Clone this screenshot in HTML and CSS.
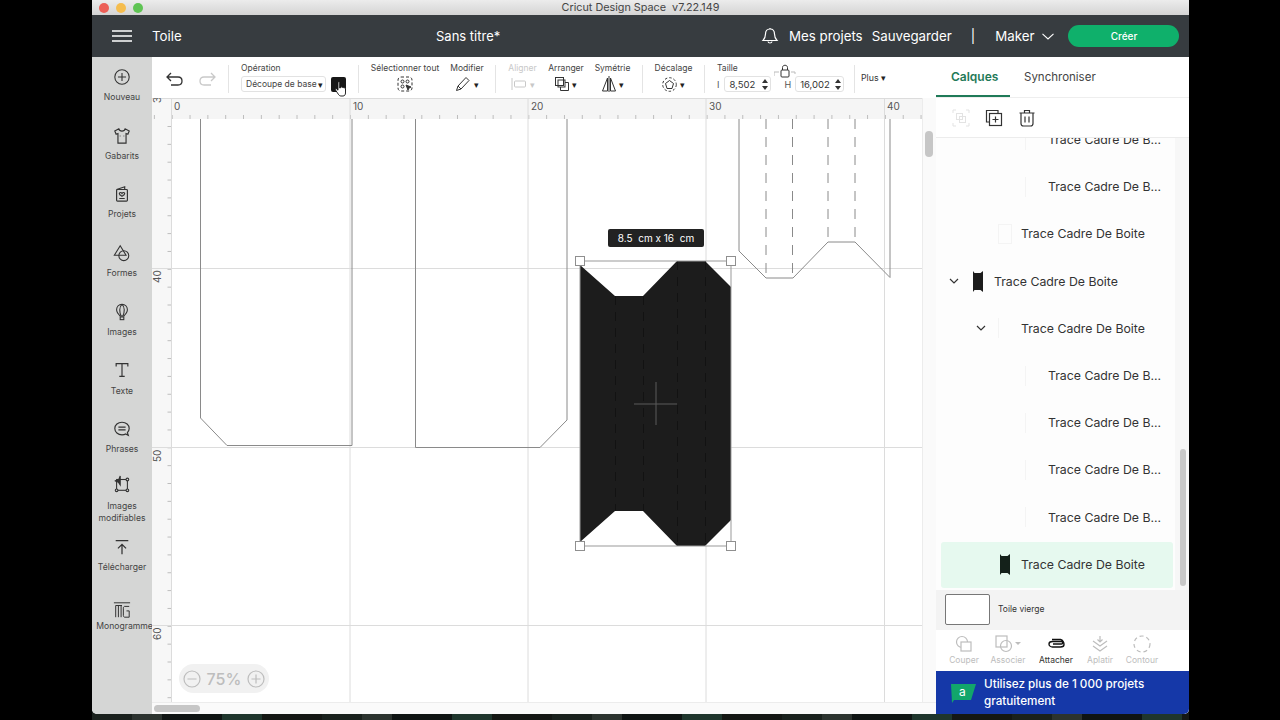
FILE: index.html
```html
<!DOCTYPE html>
<html lang="fr">
<head>
<meta charset="utf-8">
<title>Cricut Design Space</title>
<link rel="stylesheet" href="styles.css">
</head>
<body>
<div class="stage">
<div class="window">
  <div class="titlebar">
    <div class="lights"><span class="light red"></span><span class="light amber"></span><span class="light green"></span></div>
    <div class="apptitle">Cricut Design Space&nbsp; v7.22.149</div>
  </div>
  <header class="topbar">
    <svg class="burger" width="20" height="12" viewBox="0 0 20 12"><path d="M0 1h20M0 6h20M0 11h20" stroke="#fff" stroke-width="1.5"/></svg>
    <span class="top-toile">Toile</span>
    <span class="top-name">Sans titre*</span>
    <svg class="bell" width="18" height="18" viewBox="0 0 18 18" fill="none" stroke="#fff" stroke-width="1.2"><path d="M9 2c-3 0-4.500 2.300-4.500 5 0 3-.7 4.500-2.500 6.500h14c-1.800-2-2.500-3.500-2.500-6.500 0-2.700-1.500-5-4.500-5z"/><path d="M9 1v1M7 14.500c.3 2 3.700 2 4 0"/></svg>
    <span class="top-link mes">Mes projets</span>
    <span class="top-link sauve">Sauvegarder</span>
    <span class="top-link pipe">|</span>
    <span class="top-link maker">Maker</span>
    <svg class="top-chev" width="12" height="7" viewBox="0 0 12 7" fill="none" stroke="#fff" stroke-width="1.1"><path d="M.5.800 6 6l5.500-5.200"/></svg>
    <button class="create">Créer</button>
  </header>
  <div class="main">
    <nav class="side">
      <div class="side-item it-new"><svg width="20" height="20" viewBox="0 0 20 20" fill="none" stroke="#333" stroke-width="1.200"><circle cx="10" cy="10" r="8"/><path d="M10 5.500v9M5.500 10h9"/></svg><span>Nouveau</span></div>
      <div class="side-item"><svg width="20" height="20" viewBox="0 0 20 20" fill="none" stroke="#333" stroke-width="1.300"><path d="M6.500 2 2 4.500 3.500 8l2-.7V18h9V7.300l2 .7L18 4.500 13.500 2c-.5 2-2 2.500-3.500 2.500S7 4 6.500 2z"/><path d="M7.500 10h.8M11.700 10h.8" /></svg><span>Gabarits</span></div>
      <div class="side-item"><svg width="20" height="20" viewBox="0 0 20 20" fill="none" stroke="#333" stroke-width="1.300"><path d="M4 5l9-3v3"/><rect x="4" y="5" width="12" height="13" rx="1"/><path d="M7 9.500c0-1.500 2.200-1.500 3 0 .8-1.500 3-1.500 3 0 0 1.500-3 3-3 3s-3-1.500-3-3zM7 15h6"/></svg><span>Projets</span></div>
      <div class="side-item"><svg width="20" height="20" viewBox="0 0 20 20" fill="none" stroke="#333" stroke-width="1.200"><path d="M8 2 1.500 12.500h13z"/><circle cx="12" cy="13" r="5.500"/></svg><span>Formes</span></div>
      <div class="side-item"><svg width="20" height="20" viewBox="0 0 20 20" fill="none" stroke="#333" stroke-width="1.200"><path d="M10 1.500c-3.500 0-6 2.500-6 6 0 3 2.500 5.500 4 7h4c1.500-1.500 4-4 4-7 0-3.500-2.500-6-6-6z"/><path d="M10 1.500c-1.800 1.500-2.500 3.500-2.500 6s.5 5 1.500 7M10 1.500c1.800 1.500 2.500 3.500 2.500 6s-.5 5-1.500 7"/><rect x="8" y="15.500" width="4" height="3"/></svg><span>Images</span></div>
      <div class="side-item it-txt"><svg width="20" height="20" viewBox="0 0 20 20" fill="none" stroke="#333" stroke-width="1.300"><path d="M3.500 6V3h13v3M10 3v14M7 17h6"/></svg><span>Texte</span></div>
      <div class="side-item it-phr"><svg width="20" height="20" viewBox="0 0 20 20" fill="none" stroke="#333" stroke-width="1.300"><path d="M10 2.500c-4.500 0-8 3-8 7s3.500 7 8 7c1.500 0 3-.3 4-1l3 1.500-1-3c1.200-1.300 2-2.800 2-4.500 0-4-3.500-7-8-7z"/><path d="M6 8h8M6 11h8"/></svg><span>Phrases</span></div>
      <div class="side-item it-mod"><svg width="20" height="20" viewBox="0 0 20 20" fill="none" stroke="#333" stroke-width="1.200"><rect x="4" y="5" width="12" height="12"/><circle cx="4" cy="17" r="1.500" fill="#d5d6d5"/><circle cx="16" cy="17" r="1.500" fill="#d5d6d5"/><circle cx="16" cy="5" r="1.500" fill="#d5d6d5"/><path d="M8 1 6 6 2 6.500l4 1.500 2 3z" fill="#333"/></svg><span>Images<br>modifiables</span></div>
      <div class="side-item it-tel"><svg width="20" height="20" viewBox="0 0 20 20" fill="none" stroke="#333" stroke-width="1.400"><path d="M3 3h14M10 18V7M5.500 11.500 10 7l4.500 4.500"/></svg><span>Télécharger</span></div>
      <div class="side-item it-mono"><svg width="20" height="20" viewBox="0 0 20 20" fill="none" stroke="#333" stroke-width="1.100"><path d="M1 2h18M3 5h7M3 5v13M6 5v13M9 5v13M18 6h-5c-1 0-1.500 1-1.500 2v8c0 1 .5 2 1.500 2h5v-7h-3"/></svg><span>Monogramme</span></div>
    </nav>
    <section class="center">
      <div class="toolbar">
        <div class="history">
          <svg width="18" height="16" viewBox="0 0 18 16" fill="none" stroke="#333" stroke-width="1.300"><path d="M5 1 1 5l4 4M1 5h11c2.500 0 4 1.500 4 4s-1.500 4-4 4H5"/></svg>
          <svg width="18" height="16" viewBox="0 0 18 16" fill="none" stroke="#c9c9c9" stroke-width="1.300"><path d="M13 1l4 4-4 4M17 5H6C3.500 5 2 6.500 2 9s1.500 4 4 4h7"/></svg>
        </div>
        <i class="sep"></i>
        <div class="tool w-op">
          <label class="tl left">Opération</label>
          <div class="ctl">
            <span class="select">Découpe de base<b class="tri">▾</b></span>
            <span class="swatch"></span>
          </div>
        </div>
        <i class="sep"></i>
        <div class="tool w-sel">
          <label class="tl">Sélectionner tout</label>
          <div class="ctl"><svg width="16" height="16" viewBox="0 0 16 16" fill="none" stroke="#333" stroke-width="1"><rect x="1" y="1" width="14" height="14" rx="3" stroke-dasharray="3 2"/><circle cx="5.500" cy="5.500" r="1.500"/><circle cx="10.500" cy="5.500" r="1.500"/><circle cx="5.500" cy="10.500" r="1.500"/><path d="M9 9l5 2-2 1-1 2z" fill="#333"/></svg></div>
        </div>
        <div class="tool w-mod">
          <label class="tl">Modifier</label>
          <div class="ctl"><svg width="16" height="16" viewBox="0 0 16 16" fill="none" stroke="#333" stroke-width="1"><path d="M1.500 14.500 3 10l8-8.500 3 3L6 13z"/><path d="M3 10l3 3"/></svg><b class="tri">▾</b></div>
        </div>
        <i class="sep"></i>
        <div class="tool w-ali off">
          <label class="tl">Aligner</label>
          <div class="ctl"><svg width="16" height="12" viewBox="0 0 16 12" fill="none" stroke="#c8c8c8" stroke-width="1"><path d="M1 0v12"/><rect x="3.500" y="3" width="11" height="6" rx="1"/></svg><b class="tri">▾</b></div>
        </div>
        <div class="tool w-arr">
          <label class="tl">Arranger</label>
          <div class="ctl"><svg width="14" height="14" viewBox="0 0 14 14" fill="none" stroke="#333" stroke-width="1"><rect x=".5" y=".5" width="8" height="8"/><rect x="3" y="3" width="7" height="7"/><path d="M10 5.500h3.500v8h-8V10"/></svg><b class="tri">▾</b></div>
        </div>
        <div class="tool w-sym">
          <label class="tl">Symétrie</label>
          <div class="ctl"><svg width="14" height="16" viewBox="0 0 14 16" fill="none" stroke="#333" stroke-width="1"><path d="M7 0v16M5.500 2 .5 15h5zM8.500 2l5 13h-5z"/></svg><b class="tri">▾</b></div>
        </div>
        <i class="sep"></i>
        <div class="tool w-dec">
          <label class="tl">Décalage</label>
          <div class="ctl"><svg width="15" height="15" viewBox="0 0 15 15" fill="none" stroke="#333" stroke-width="1"><path d="M7.500 3.500 11.500 6.500 10 11.500H5L3.500 6.500z"/><circle cx="7.500" cy="7.500" r="6.800" stroke-dasharray="2.500 2"/></svg><b class="tri">▾</b></div>
        </div>
        <i class="sep"></i>
        <div class="tool w-size">
          <label class="tl left">Taille</label>
          <div class="ctl size-row">
            <span class="dim">I</span>
            <span class="num n-w">8,502<em class="spin"></em></span>
            <span class="dim dim-h">H</span>
            <span class="num n-h">16,002<em class="spin"></em></span>
          </div>
          <svg class="lock" width="22" height="16" viewBox="0 0 22 16" fill="none" stroke="#333" stroke-width="1"><rect x="7" y="6" width="8" height="7" rx="1"/><path d="M8.500 6V3.500c0-3 5-3 5 0V6"/><path d="M0 12V8h5M17 8h4v2" stroke="#bbb"/></svg>
        </div>
        <i class="sep"></i>
        <div class="plus">Plus<b class="tri">▾</b></div>
      </div>
      <div class="work">
        <svg class="canvas" width="770" height="604" viewBox="152 98 770 604">
          <defs>
            <pattern id="tx" x="171.700" y="98" width="17.830" height="21" patternUnits="userSpaceOnUse"><path d="M.5 17v4" stroke="#bdbdbd"/></pattern>
            <pattern id="ty" x="152" y="90.300" width="19" height="17.850" patternUnits="userSpaceOnUse"><path d="M15.500 .5h3.500" stroke="#bdbdbd"/></pattern>
          </defs>
          <rect x="152" y="98" width="770" height="604" fill="#fff"/>
          <rect x="152" y="98" width="770" height="21" fill="#f5f5f5"/>
          <rect x="152" y="98" width="19" height="604" fill="#f7f7f7"/>
          <rect x="152" y="98" width="770" height="21" fill="url(#tx)"/>
          <rect x="152" y="119" width="19" height="583" fill="url(#ty)"/>
          <path class="grid" d="M171.500 98V702M350 98V702M528 98V702M706 98V702M884.500 98V702M152 268.500H922M152 447.500H922M152 625.500H922"/>
          <path d="M152 98.500H922" stroke="#dcdcdc" fill="none"/>
          <text class="rule" x="174" y="110">0</text>
          <text class="rule" x="353" y="110">10</text>
          <text class="rule" x="531" y="110">20</text>
          <text class="rule" x="709" y="110">30</text>
          <text class="rule" x="887" y="110">40</text>
          <text class="rule" transform="translate(161 103) rotate(-90)" x="0" y="0">3</text>
          <text class="rule" transform="translate(161 283) rotate(-90)" x="0" y="0">40</text>
          <text class="rule" transform="translate(161 462) rotate(-90)" x="0" y="0">50</text>
          <text class="rule" transform="translate(161 640) rotate(-90)" x="0" y="0">60</text>
          <path class="cut" d="M200.500 119V418L227 445.500H352V119"/>
          <path class="cut" d="M415.500 119V447.500H540L567 420V119"/>
          <path class="cut" d="M739 119V251L766 278H793L828 242H855L890 277.500V119"/>
          <path class="dash" d="M766 119V278M792.500 119V278M828 119V242M855 119V242"/>
          <path class="solid" d="M580 265 615 296H643L677 261H705L731 287V520L705 546H677L643 511H615L580 542Z"/>
          <path class="dash-dark" d="M615.500 296V511M643.500 296V511M677.500 261V546M705.500 261V546"/>
          <path d="M634 404H677M656 382V425" stroke="#5a5a5a" fill="none"/>
          <rect class="sel" x="580" y="261" width="151" height="285"/>
          <rect class="handle" x="575.500" y="256.500" width="9" height="9"/>
          <rect class="handle" x="726.500" y="256.500" width="9" height="9"/>
          <rect class="handle" x="575.500" y="541.500" width="9" height="9"/>
          <rect class="handle" x="726.500" y="541.500" width="9" height="9"/>
          <rect x="608" y="229" width="96" height="18" rx="2" fill="#222"/>
          <text class="tip" x="656" y="242" text-anchor="middle" xml:space="preserve">8.5  cm x 16  cm</text>
        </svg>
        <div class="vscroll"><span></span></div>
        <div class="zoom">
          <svg width="18" height="18" viewBox="0 0 18 18" fill="none" stroke="#bdbdbd" stroke-width="1.200"><circle cx="9" cy="9" r="8"/><path d="M4.500 9h9"/></svg>
          <span>75%</span>
          <svg width="18" height="18" viewBox="0 0 18 18" fill="none" stroke="#bdbdbd" stroke-width="1.200"><circle cx="9" cy="9" r="8"/><path d="M4.500 9h9M9 4.500v9"/></svg>
        </div>
      </div>
      <div class="hscroll"><span></span></div>
      <svg class="hand" width="14" height="16" viewBox="0 0 14 16"><path d="M4 1.500c0-1 1.700-1 1.700 0V7l1-.3v-.5c.7-.6 1.500-.3 1.600.3.700-.5 1.500-.2 1.600.5.800-.4 1.600 0 1.600.8V12c0 1.800-1 3-2.500 3H7c-1.200 0-2-.7-2.700-1.800L1.500 9C1 8 2 7.300 2.800 8L4 9.200z" fill="#fff" stroke="#111" stroke-width=".9"/></svg>
    </section>
    <aside class="panel">
      <div class="tabs"><span class="tab on">Calques</span><span class="tab">Synchroniser</span></div>
      <div class="layer-tools">
        <svg width="18" height="18" viewBox="0 0 18 18" fill="none" stroke="#e3e3e3"><path d="M1 4V1h3M14 1h3v3M17 14v3h-3M4 17H1v-3"/><rect x="4.500" y="4.500" width="6" height="6"/><rect x="7.500" y="7.500" width="6" height="6"/></svg>
        <svg width="18" height="18" viewBox="0 0 18 18" fill="none" stroke="#333" stroke-width="1.200"><path d="M4 13H1.500V1.500H13V4"/><rect x="4.500" y="4.500" width="12" height="12"/><path d="M10.500 7.500v6M7.500 10.500h6"/></svg>
        <svg width="18" height="18" viewBox="0 0 18 18" fill="none" stroke="#333" stroke-width="1.200"><path d="M1.500 4h15M6.500 4V1.500h5V4M3 4v10.500c0 1.500 1 2.500 2.500 2.500h7c1.500 0 2.500-1 2.500-2.500V4M7 7.500v6M11 7.500v6"/></svg>
      </div>
      <div class="layers">
        <div class="list">
          <div class="row deep"><i class="chev"></i><i class="thumb faint"></i><span>Trace Cadre De B...</span></div>
          <div class="row deep"><i class="chev"></i><i class="thumb faint"></i><span>Trace Cadre De B...</span></div>
          <div class="row mid"><i class="chev"></i><i class="thumb faint box"></i><span>Trace Cadre De Boite</span></div>
          <div class="row top"><svg class="chev" width="10" height="6" viewBox="0 0 10 6" fill="none" stroke="#333" stroke-width="1.200"><path d="M1 1l4 4 4-4"/></svg><svg class="thumb" width="14" height="21" viewBox="0 0 14 21"><path d="M2 0l1.500 2h6L12 0v21l-2.500-2h-6L2 21z" fill="#1c1c1c"/></svg><span>Trace Cadre De Boite</span></div>
          <div class="row mid"><svg class="chev" width="10" height="6" viewBox="0 0 10 6" fill="none" stroke="#333" stroke-width="1.200"><path d="M1 1l4 4 4-4"/></svg><i class="thumb faint"></i><span>Trace Cadre De Boite</span></div>
          <div class="row deep"><i class="chev"></i><i class="thumb faint"></i><span>Trace Cadre De B...</span></div>
          <div class="row deep"><i class="chev"></i><i class="thumb faint"></i><span>Trace Cadre De B...</span></div>
          <div class="row deep"><i class="chev"></i><i class="thumb faint"></i><span>Trace Cadre De B...</span></div>
          <div class="row deep"><i class="chev"></i><i class="thumb faint"></i><span>Trace Cadre De B...</span></div>
          <div class="row current"><i class="chev"></i><svg class="thumb" width="14" height="21" viewBox="0 0 14 21"><path d="M2 0l1.500 2h6L12 0v21l-2.500-2h-6L2 21z" fill="#14211a"/></svg><span>Trace Cadre De Boite</span></div>
        </div>
        <div class="track"><span></span></div>
      </div>
      <div class="blank"><i class="blank-box"></i><span>Toile vierge</span></div>
      <div class="actions">
        <div class="act"><svg width="18" height="18" viewBox="0 0 18 18" fill="none" stroke="#bdbdbd" stroke-width="1.200"><circle cx="7" cy="7" r="5.500"/><rect x="6" y="7" width="10" height="9" fill="#fff"/></svg><span>Couper</span></div>
        <div class="act"><svg width="26" height="18" viewBox="0 0 26 18" fill="none" stroke="#bdbdbd" stroke-width="1.200"><rect x="1" y="1" width="11" height="11"/><circle cx="11" cy="11" r="5.500"/><path d="M20 7h6l-3 3z" fill="#bdbdbd" stroke="none"/></svg><span>Associer</span></div>
        <div class="act active gap"><svg width="18" height="18" viewBox="0 0 18 18" fill="none" stroke="#111" stroke-width="1.400"><path d="M6 9h8.500c1.500 0 1.500-2.500 0-2.500H5.500C3.500 6.500 2 7.500 2 9s1.500 3 3.500 3h8c2 0 3.500-1 3.500-2.500S16 5 13.500 4.500H5"/></svg><span>Attacher</span></div>
        <div class="act"><svg width="18" height="18" viewBox="0 0 18 18" fill="none" stroke="#bdbdbd" stroke-width="1.200"><path d="M9 1v6M6.500 4.500 9 7l2.500-2.500M2 6l7 5 7-5M2 11l7 5 7-5"/></svg><span>Aplatir</span></div>
        <div class="act tight"><svg width="18" height="18" viewBox="0 0 18 18" fill="none" stroke="#bdbdbd" stroke-width="1.200"><circle cx="9" cy="9" r="8" stroke-dasharray="4 3"/></svg><span>Contour</span></div>
      </div>
      <div class="banner">
        <svg width="26" height="21" viewBox="0 0 26 21"><path d="M1 2h25l-5 16H4l-2 3z" fill="#12a66b"/><text x="9" y="14" class="banner-a">a</text></svg>
        <p>Utilisez plus de 1 000 projets gratuitement</p>
      </div>
    </aside>
  </div>
</div>
</div>
</body>
</html>
```

FILE: styles.css
```css
* { box-sizing: border-box; }
html, body { margin: 0; padding: 0; }
body {
  width: 1280px; height: 720px; overflow: hidden; background: #000;
  font-family: Inter, "Liberation Sans", sans-serif; color: #333;
}
.stage {
  width: 1097px; height: 720px; margin-left: 92px;
  background: repeating-linear-gradient(90deg, #1a211d 0 40px, #2c332f 40px 70px, #0f1413 70px 130px, #1f362d 130px 170px, #141714 170px 230px);
}
.window {
  width: 1097px; height: 714px; display: flex; flex-direction: column;
  border-radius: 0 0 5px 5px; overflow: hidden; background: #fff;
}
.titlebar {
  height: 15px; flex: none; display: flex; align-items: center; position: relative;
  background: linear-gradient(#ececec, #d4d4d4);
}
.lights { display: flex; gap: 7px; padding-left: 7px; }
.light { width: 10px; height: 10px; border-radius: 50%; }
.red { background: #ec5f57; } .amber { background: #f5bd4f; } .green { background: #5fc454; }
.apptitle { position: absolute; left: 0; right: 0; text-align: center; font-size: 10.800px; color: #444; line-height: 13px; }

.topbar {
  height: 42px; flex: none; background: #373c40; color: #fff; display: flex; align-items: center;
  font-size: 13.300px; white-space: nowrap;
}
.burger { margin-left: 20px; flex: none; }
.top-toile { margin-left: 20px; width: 284px; flex: none; }
.top-name { width: 325px; font-size: 13px; flex: none; }
.top-link { font-size: 13.300px; flex: none; }
.bell { flex: none; }
.mes { margin-left: 10px; }
.sauve { margin-left: 9px; }
.pipe { margin-left: 19px; }
.maker { margin-left: 20px; }
.top-chev { margin-left: 8px; flex: none; }
.create {
  margin-left: 14px; width: 111px; height: 22px; border: 0; border-radius: 11px; flex: none;
  background: #0fb06b; color: #fff; font: 500 10px Inter, sans-serif;
}

.main { flex: 1; display: flex; min-height: 0; }
.side {
  width: 60px; flex: none; background: #d5d6d5; display: flex; flex-direction: column;
  align-items: center; padding-top: 10px;
}
.side-item { height: 58.700px; width: 60px; flex: none; display: flex; flex-direction: column; align-items: center; font-size: 8.600px; color: #444; text-align: center; line-height: 12px; }
.side-item svg { width: 18px; height: 18px; margin: 1px 0; flex: none; }
.side-item span { margin-top: 4px; white-space: nowrap; }
.it-txt span { margin-top: 5px; }
.it-phr { height: 55px; }
.it-phr span { margin-top: 4px; }
.it-mod { height: 63px; }
.it-mod span { margin-top: 6px; }
.it-tel { height: 63px; }
.it-tel span { margin-top: 4px; }
.it-mono span { margin: 0 0 0 5px; }

.center { width: 784px; flex: none; display: flex; flex-direction: column; position: relative; }
.toolbar { height: 41px; flex: none; display: flex; align-items: center; gap: 12px; background: #fff; position: relative; z-index: 1; }
.history { width: 75px; margin-right: -11px; display: flex; gap: 14px; padding-left: 14px; flex: none; padding-top: 4px; }
.sep { width: 1px; height: 28px; background: #e4e4e4; flex: none; margin-top: 3px; }
.tool { flex: none; display: flex; flex-direction: column; align-items: center; position: relative; padding-top: 5px; height: 41px; }
.tl { font-size: 8.500px; line-height: 13px; color: #444; white-space: nowrap; height: 13px; }
.tl.left { align-self: flex-start; }
.ctl { display: flex; align-items: center; justify-content: center; height: 18px; margin-top: 0; gap: 3px; }
.tri { font-size: 9px; font-weight: 400; color: #222; line-height: 9px; }
.w-op { width: 105px; }
.w-op .ctl { align-self: flex-start; gap: 5px; }
.w-sel { width: 68px; }
.w-mod { width: 32px; }
.w-ali { width: 29px; }
.w-ali .tl { color: #c8c8c8; }
.w-ali .tri { color: #c8c8c8; }
.w-arr { width: 34px; }
.w-sym { width: 35px; }
.w-dec { width: 37px; }
.w-size { width: 125px; }
.select {
  width: 85px; height: 16px; border: 1px solid #e2e2e2; border-radius: 3px; font-size: 8.500px; color: #444;
  display: flex; align-items: center; padding-left: 4px; gap: 1px; white-space: nowrap;
}
.swatch { width: 15px; height: 15px; border-radius: 2px; background: #171717; }
.size-row { align-self: flex-start; justify-content: flex-start; gap: 0; }
.dim { font-size: 9px; color: #555; }
.dim-h { margin-left: 13px; }
.num {
  display: flex; align-items: center; justify-content: space-between; height: 16px; border: 1px solid #e2e2e2; border-radius: 3px;
  font-size: 9.500px; color: #333; padding: 0 2px 0 4px;
}
.n-w { width: 47px; margin-left: 5px; }
.n-h { width: 49px; margin-left: 4px; }
.spin { width: 7px; height: 11px; flex: none; display: flex; flex-direction: column; justify-content: space-between; align-items: center; }
.spin::before { content: ""; border: 3px solid transparent; border-top: 0; border-bottom: 4px solid #333; }
.spin::after { content: ""; border: 3px solid transparent; border-bottom: 0; border-top: 4px solid #333; }
.lock { position: absolute; left: 57px; top: 7px; }
.plus { font-size: 8.800px; color: #333; margin-left: -6px; display: flex; gap: 2px; align-items: center; }

.work { flex: 1; min-height: 0; display: flex; position: relative; }
.canvas { display: block; flex: none; }
.grid { stroke: #dcdcdc; fill: none; }
.rule { font: 10px Inter, sans-serif; fill: #555; }
.cut { fill: none; stroke: #8a8a8a; stroke-width: 1; }
.dash { fill: none; stroke: #8a8a8a; stroke-dasharray: 10 8; }
.solid { fill: #1c1c1c; }
.dash-dark { fill: none; stroke: #121212; stroke-dasharray: 9 7; }
.sel { fill: none; stroke: #999; }
.handle { fill: #fff; stroke: #8f8f8f; }
.tip { font: 10px Inter, sans-serif; fill: #fff; white-space: pre; }
.vscroll { width: 14px; flex: none; background: #fafafa; border-left: 1px solid #ececec; padding: 33px 0 0 2px; }
.vscroll span { display: block; width: 8px; height: 26px; border-radius: 4px; background: #c6c6c6; }
.zoom {
  position: absolute; left: 27px; top: 566px; width: 90px; height: 29px; border-radius: 15px; background: #f1f1f1;
  display: flex; align-items: center; justify-content: center; gap: 6px; color: #bdbdbd; font-size: 16px; font-weight: 500;
}
.hscroll { height: 12px; flex: none; background: #fafafa; border-top: 1px solid #ececec; padding: 2px 0 0 2px; }
.hscroll span { display: block; width: 46px; height: 7px; border-radius: 4px; background: #c6c6c6; }
.hand { position: absolute; left: 182px; top: 24px; z-index: 2; }

.panel { width: 253px; flex: none; display: flex; flex-direction: column; background: #fff; }
.tabs { height: 41px; flex: none; display: flex; border-bottom: 1px solid #eee; }
.tab { padding: 0 14px; line-height: 40px; font-size: 11.500px; color: #444; height: 40px; }
.tab.on { width: 74px; padding-left: 15px; line-height: 39px; color: #1f7a58; font-size: 12px; font-weight: 600; border-bottom: 2px solid #1f7a58; }
.layer-tools { height: 40px; flex: none; display: flex; align-items: center; gap: 15px; padding-left: 16px; border-bottom: 1px solid #ececec; }
.layers { flex: none; height: 452px; display: flex; overflow: hidden; }
.list { width: 239px; flex: none; background: #fdfdfd; overflow: hidden; height: 452px; }
.row { height: 47.200px; display: flex; align-items: center; font-size: 12.300px; color: #333; white-space: nowrap; }
.row:first-child { margin-top: -22px; }
.deep { padding-left: 67px; } .mid { padding-left: 40px; } .top { padding-left: 13px; }
.chev { width: 10px; margin-right: 12px; flex: none; display: block; }
.thumb { width: 14px; margin-right: 9px; flex: none; display: block; }
.faint { height: 20px; border-left: 1px solid #f4f4f4; }
.box { border: 1px solid #f4f4f4; }
.current { background: #e6f9ef; margin: 1px 3px 0 5px; width: 232px; padding-left: 35px; height: 46px; border-radius: 3px; }
.track { flex: 1; background: #f7f7f7; padding: 311px 0 0 5px; }
.track span { display: block; width: 6px; height: 137px; border-radius: 3px; background: #c8c8c8; }
.blank { height: 40px; flex: none; background: #f3f3f3; display: flex; align-items: center; padding: 0 0 2px 9px; font-size: 8.500px; color: #333; }
.blank-box { width: 45px; height: 31px; background: #fff; border: 1px solid #777; border-radius: 2px; margin-right: 8px; flex: none; }
.actions { height: 41px; flex: none; display: flex; padding: 5px 0 0 6px; }
.act { width: 44px; display: flex; flex-direction: column; align-items: center; justify-content: space-between; font-size: 8.500px; color: #bdbdbd; height: 30px; white-space: nowrap; }
.act.active { color: #333; }
.gap { margin-left: 4px; }
.tight { margin-left: -2px; }
.banner { flex: 1; background: #1538a8; color: #fff; display: flex; align-items: center; padding-left: 14px; gap: 8px; }
.banner p { margin: 0; font-size: 11.700px; line-height: 17px; width: 190px; font-weight: 500; }
.banner-a { font: 12px Inter, sans-serif; fill: #fff; }
```
